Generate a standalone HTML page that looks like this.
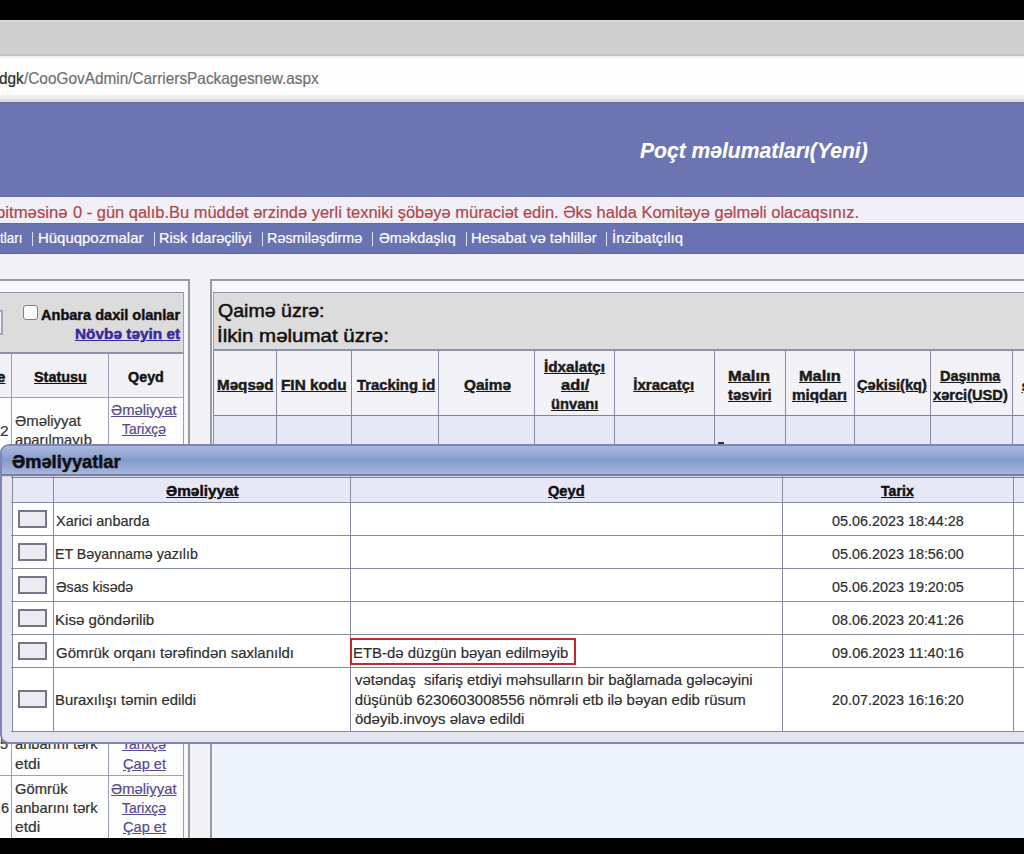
<!DOCTYPE html>
<html><head><meta charset="utf-8">
<style>
*{margin:0;padding:0;box-sizing:border-box}
html,body{width:1024px;height:854px;overflow:hidden;background:#f3f3f6;font-family:"Liberation Sans",sans-serif;position:relative}
.a{position:absolute}
.t{position:absolute;white-space:nowrap;line-height:1;transform-origin:0 0;-webkit-text-stroke:0.2px currentColor}
.hl{position:absolute;height:1px}
.vl{position:absolute;width:1px}
</style></head><body>
<div class="a" style="left:0;top:0;width:1024px;height:20px;background:#000"></div>
<div class="a" style="left:0;top:20px;width:1024px;height:36px;background:#cfcfcf"></div>
<div class="a" style="left:0;top:20px;width:1024px;height:2px;background:#dadada"></div><div class="a" style="left:0;top:54px;width:1024px;height:2px;background:#c4c4c4"></div><div class="a" style="left:0;top:56px;width:1024px;height:2px;background:#f0f0f0"></div>
<div class="a" style="left:0;top:58px;width:1024px;height:40px;background:#fdfdfd"></div>
<div class="a" style="left:0;top:95px;width:1024px;height:3px;background:#efeef2"></div>
<div class="a" style="left:0;top:99px;width:1024px;height:3px;background:#d8dbec"></div>
<div class="a" style="left:0;top:102px;width:1024px;height:1px;background:#666c9c"></div>
<div class="a" style="left:0;top:103px;width:1024px;height:94px;background:#6c75b2"></div>
<div class="a" style="left:0;top:197px;width:1024px;height:26px;background:#f1eff7"></div>
<div class="a" style="left:0;top:223px;width:1024px;height:31px;background:#6a73b1"></div>
<div class="a" style="left:0;top:196px;width:1024px;height:1px;background:#656b9e"></div>
<div class="a" style="left:0;top:223px;width:1024px;height:1px;background:#646a9c"></div>
<div class="a" style="left:0;top:253px;width:1024px;height:1px;background:#62689a"></div>

<!-- left panel -->
<div class="a" style="left:-10px;top:279px;width:200px;height:600px;border:2px solid #979ba8;background:#f8f8fb"></div>
<div class="a" style="left:-10px;top:292px;width:194px;height:62px;border-top:1px solid #8a92aa;border-right:1px solid #9aa0b4;border-bottom:2px solid #8a92aa;background:#dcdcdd"></div>
<div class="a" style="left:-8px;top:310px;width:11px;height:25px;border:2px solid #a4a6bc;background:#f4f4f6"></div>
<div class="a" style="left:23px;top:305px;width:15px;height:15px;border:1px solid #808080;border-radius:3px;background:#fcfcfc"></div>
<div class="a" style="left:-10px;top:354px;width:194px;height:44px;background:#f1f1f5"></div>
<div class="a" style="left:-10px;top:398px;width:193px;height:440px;background:#fdfdfd"></div>
<div class="hl" style="left:-10px;top:397px;width:194px;background:#9aa0b4"></div>
<div class="hl" style="left:-10px;top:775px;width:194px;background:#9aa0b4"></div>
<div class="vl" style="left:11px;top:353px;height:485px;background:#9aa0b4"></div>
<div class="vl" style="left:108px;top:353px;height:485px;background:#9aa0b4"></div>
<div class="vl" style="left:183px;top:353px;height:485px;background:#9aa0b4"></div>

<!-- right panel -->
<div class="a" style="left:210px;top:279px;width:830px;height:600px;border:2px solid #979ba8;background:#f8f8fb"></div>
<div class="a" style="left:212px;top:445px;width:830px;height:400px;background:#eff3fb"></div>
<div class="a" style="left:213px;top:292px;width:830px;height:59px;border-top:1px solid #8a92aa;border-left:1px solid #9aa0b4;border-bottom:2px solid #8a92aa;background:#dcdcdd"></div>
<div class="a" style="left:214px;top:351px;width:830px;height:64px;background:#f3f3f7"></div>
<div class="a" style="left:214px;top:416px;width:830px;height:29px;background:#e6e9f5"></div>
<div class="hl" style="left:214px;top:415px;width:830px;background:#80849c"></div>
<div class="vl" style="left:213px;top:351px;height:94px;background:#868aa4"></div>
<div class="vl" style="left:276px;top:351px;height:94px;background:#868aa4"></div>
<div class="vl" style="left:351px;top:351px;height:94px;background:#868aa4"></div>
<div class="vl" style="left:438px;top:351px;height:94px;background:#868aa4"></div>
<div class="vl" style="left:534px;top:351px;height:94px;background:#868aa4"></div>
<div class="vl" style="left:614px;top:351px;height:94px;background:#868aa4"></div>
<div class="vl" style="left:714px;top:351px;height:94px;background:#868aa4"></div>
<div class="vl" style="left:785px;top:351px;height:94px;background:#868aa4"></div>
<div class="vl" style="left:854px;top:351px;height:94px;background:#868aa4"></div>
<div class="vl" style="left:930px;top:351px;height:94px;background:#868aa4"></div>
<div class="vl" style="left:1012px;top:351px;height:94px;background:#868aa4"></div>
<div class="a" style="left:718px;top:442px;width:6px;height:2px;background:#333"></div>

<div class="a" style="left:32px;top:232px;width:1.3px;height:14px;background:#dfe2f3"></div><div class="a" style="left:153.5px;top:232px;width:1.3px;height:14px;background:#dfe2f3"></div><div class="a" style="left:261.5px;top:232px;width:1.3px;height:14px;background:#dfe2f3"></div><div class="a" style="left:372px;top:232px;width:1.3px;height:14px;background:#dfe2f3"></div><div class="a" style="left:465.5px;top:232px;width:1.3px;height:14px;background:#dfe2f3"></div><div class="a" style="left:606px;top:232px;width:1.3px;height:14px;background:#dfe2f3"></div>
<div class="t" style="left:-1.44px;top:69.97px;font-size:16.5px;color:#2a2a2a;transform:scaleX(0.9300);">dgk</div>
<div class="t" style="left:23.60px;top:69.97px;font-size:16.5px;color:#707070;transform:scaleX(0.9314);">/CooGovAdmin/CarriersPackagesnew.aspx</div>
<div class="t" style="left:640.00px;top:140.92px;font-size:21.5px;color:#ffffff;font-weight:bold;-webkit-text-stroke:0.45px #ffffff;font-style:italic;transform:scaleX(0.9805);-webkit-text-stroke:0.15px #fff;">Poçt məlumatları(Yeni)</div>
<div class="t" style="left:-3.79px;top:203.85px;font-size:17px;color:#b04648;transform:scaleX(0.9847);">bitməsinə</div>
<div class="t" style="left:72.60px;top:203.85px;font-size:17px;color:#b04648;transform:scaleX(0.9678);">0 - gün qalıb.Bu müddət ərzində yerli texniki şöbəyə müraciət edin. Əks halda Komitəyə gəlməli olacaqsınız.</div>
<div class="t" style="left:0.48px;top:230.68px;font-size:14.5px;color:#ffffff;transform:scaleX(0.9300);">tları</div>
<div class="t" style="left:37.87px;top:230.68px;font-size:14.5px;color:#ffffff;transform:scaleX(1.0302);">Hüquqpozmalar</div>
<div class="t" style="left:159.00px;top:230.68px;font-size:14.5px;color:#ffffff;">Risk Idarəçiliyi</div>
<div class="t" style="left:266.81px;top:230.68px;font-size:14.5px;color:#ffffff;transform:scaleX(0.9935);">Rəsmiləşdirmə</div>
<div class="t" style="left:378.70px;top:230.68px;font-size:14.5px;color:#ffffff;transform:scaleX(0.9957);">Əməkdaşlıq</div>
<div class="t" style="left:470.88px;top:230.68px;font-size:14.5px;color:#ffffff;transform:scaleX(1.0189);">Hesabat və təhlillər</div>
<div class="t" style="left:611.88px;top:230.68px;font-size:14.5px;color:#ffffff;transform:scaleX(1.0242);">İnzibatçılıq</div>
<div class="t" style="left:41.20px;top:307.05px;font-size:15px;color:#111;font-weight:bold;-webkit-text-stroke:0.45px #111;transform:scaleX(0.9698);">Anbara daxil olanlar</div>
<div class="t" style="left:75.27px;top:325.75px;font-size:15px;color:#36289e;font-weight:bold;-webkit-text-stroke:0.45px #36289e;text-decoration:underline;transform:scaleX(1.0253);">Növbə təyin et</div>
<div class="t" style="left:33.80px;top:369.35px;font-size:15px;color:#111;font-weight:bold;-webkit-text-stroke:0.45px #111;text-decoration:underline;transform:scaleX(0.9609);">Statusu</div>
<div class="t" style="left:128.30px;top:369.35px;font-size:15px;color:#111;font-weight:bold;-webkit-text-stroke:0.45px #111;transform:scaleX(0.9558);">Qeyd</div>
<div class="t" style="left:-3.00px;top:369.35px;font-size:15px;color:#111;font-weight:bold;-webkit-text-stroke:0.45px #111;text-decoration:underline;">e</div>
<div class="t" style="left:14.60px;top:413.68px;font-size:14.5px;color:#333333;transform:scaleX(1.0287);">Əməliyyat</div>
<div class="t" style="left:14.60px;top:432.68px;font-size:14.5px;color:#333333;transform:scaleX(1.0146);">aparılmayıb</div>
<div class="t" style="left:0.00px;top:422.82px;font-size:15.5px;color:#333333;">2</div>
<div class="t" style="left:111.30px;top:402.98px;font-size:14.5px;color:#574a8e;text-decoration:underline;transform:scaleX(1.0225);">Əməliyyat</div>
<div class="t" style="left:122.00px;top:421.57px;font-size:14.5px;color:#574a8e;text-decoration:underline;transform:scaleX(0.9594);">Tarixçə</div>
<div class="t" style="left:14.60px;top:737.17px;font-size:14.5px;color:#333333;transform:scaleX(1.0151);">anbarını tərk</div>
<div class="t" style="left:0.00px;top:737.17px;font-size:14.5px;color:#333333;">5</div>
<div class="t" style="left:122.00px;top:737.17px;font-size:14.5px;color:#574a8e;text-decoration:underline;transform:scaleX(0.9594);">Tarixçə</div>
<div class="t" style="left:14.60px;top:756.67px;font-size:14.5px;color:#333333;transform:scaleX(1.0796);">etdi</div>
<div class="t" style="left:122.50px;top:756.67px;font-size:14.5px;color:#574a8e;text-decoration:underline;transform:scaleX(1.0049);">Çap et</div>
<div class="t" style="left:14.60px;top:782.27px;font-size:14.5px;color:#333333;transform:scaleX(1.0208);">Gömrük</div>
<div class="t" style="left:14.60px;top:801.27px;font-size:14.5px;color:#333333;transform:scaleX(1.0151);">anbarını tərk</div>
<div class="t" style="left:14.60px;top:820.47px;font-size:14.5px;color:#333333;transform:scaleX(1.0796);">etdi</div>
<div class="t" style="left:1.00px;top:801.27px;font-size:14.5px;color:#333333;">6</div>
<div class="t" style="left:111.30px;top:782.27px;font-size:14.5px;color:#574a8e;text-decoration:underline;transform:scaleX(1.0225);">Əməliyyat</div>
<div class="t" style="left:122.00px;top:801.27px;font-size:14.5px;color:#574a8e;text-decoration:underline;transform:scaleX(0.9594);">Tarixçə</div>
<div class="t" style="left:122.50px;top:820.47px;font-size:14.5px;color:#574a8e;text-decoration:underline;transform:scaleX(1.0049);">Çap et</div>
<div class="t" style="left:218.40px;top:300.75px;font-size:19px;color:#111;transform:scaleX(1.0293);-webkit-text-stroke:0.5px #111;">Qaimə üzrə:</div>
<div class="t" style="left:217.32px;top:325.85px;font-size:19px;color:#111;transform:scaleX(1.0779);-webkit-text-stroke:0.5px #111;">İlkin məlumat üzrə:</div>
<div class="t" style="left:216.89px;top:377.45px;font-size:15px;color:#1a1a1a;font-weight:bold;-webkit-text-stroke:0.45px #1a1a1a;text-decoration:underline;transform:scaleX(1.0131);">Məqsəd</div>
<div class="t" style="left:280.88px;top:377.45px;font-size:15px;color:#1a1a1a;font-weight:bold;-webkit-text-stroke:0.45px #1a1a1a;text-decoration:underline;transform:scaleX(1.0223);">FIN kodu</div>
<div class="t" style="left:356.50px;top:377.45px;font-size:15px;color:#1a1a1a;font-weight:bold;-webkit-text-stroke:0.45px #1a1a1a;text-decoration:underline;transform:scaleX(0.9883);">Tracking id</div>
<div class="t" style="left:463.70px;top:377.45px;font-size:15px;color:#1a1a1a;font-weight:bold;-webkit-text-stroke:0.45px #1a1a1a;text-decoration:underline;transform:scaleX(1.0238);">Qaimə</div>
<div class="t" style="left:543.68px;top:358.85px;font-size:15px;color:#1a1a1a;font-weight:bold;-webkit-text-stroke:0.45px #1a1a1a;text-decoration:underline;transform:scaleX(1.0176);">İdxalatçı</div>
<div class="t" style="left:560.80px;top:377.45px;font-size:15px;color:#1a1a1a;font-weight:bold;-webkit-text-stroke:0.45px #1a1a1a;text-decoration:underline;transform:scaleX(1.0948);">adı/</div>
<div class="t" style="left:551.00px;top:396.25px;font-size:15px;color:#1a1a1a;font-weight:bold;-webkit-text-stroke:0.45px #1a1a1a;text-decoration:underline;transform:scaleX(0.9798);">ünvanı</div>
<div class="t" style="left:633.30px;top:377.45px;font-size:15px;color:#1a1a1a;font-weight:bold;-webkit-text-stroke:0.45px #1a1a1a;text-decoration:underline;">İxracatçı</div>
<div class="t" style="left:727.90px;top:367.95px;font-size:15px;color:#1a1a1a;font-weight:bold;-webkit-text-stroke:0.45px #1a1a1a;text-decoration:underline;transform:scaleX(1.0976);">Malın</div>
<div class="t" style="left:727.80px;top:386.95px;font-size:15px;color:#1a1a1a;font-weight:bold;-webkit-text-stroke:0.45px #1a1a1a;text-decoration:underline;transform:scaleX(0.9880);">təsviri</div>
<div class="t" style="left:798.71px;top:367.95px;font-size:15px;color:#1a1a1a;font-weight:bold;-webkit-text-stroke:0.45px #1a1a1a;text-decoration:underline;transform:scaleX(1.0895);">Malın</div>
<div class="t" style="left:792.20px;top:386.95px;font-size:15px;color:#1a1a1a;font-weight:bold;-webkit-text-stroke:0.45px #1a1a1a;text-decoration:underline;transform:scaleX(1.0165);">miqdarı</div>
<div class="t" style="left:857.20px;top:377.15px;font-size:15px;color:#1a1a1a;font-weight:bold;-webkit-text-stroke:0.45px #1a1a1a;text-decoration:underline;transform:scaleX(0.9750);">Çəkisi(kq)</div>
<div class="t" style="left:939.63px;top:367.95px;font-size:15px;color:#1a1a1a;font-weight:bold;-webkit-text-stroke:0.45px #1a1a1a;text-decoration:underline;transform:scaleX(0.9665);">Daşınma</div>
<div class="t" style="left:933.20px;top:386.95px;font-size:15px;color:#1a1a1a;font-weight:bold;-webkit-text-stroke:0.45px #1a1a1a;text-decoration:underline;transform:scaleX(0.9753);">xərci(USD)</div>
<div class="t" style="left:1021.50px;top:378.25px;font-size:15px;color:#222;font-weight:bold;-webkit-text-stroke:0.45px #222;text-decoration:underline;">ş</div>

<!-- modal -->
<div class="a" style="left:0;top:444px;width:1060px;height:300px;border:2px solid #7d84b6;border-radius:9px;background:#e4e5ee"></div>
<div class="a" style="left:2px;top:446px;width:1022px;height:28px;border-radius:7px 0 0 0;background:linear-gradient(#aab6de,#97a9d4 30%,#829bcb 50%,#94a8d3 75%,#a9b5dc)"></div>
<div class="a" style="left:2px;top:474px;width:1022px;height:2px;background:#7a80a2"></div>
<div class="hl" style="left:2px;top:476px;width:1022px;background:#d8dcee"></div>
<div class="a" style="left:12px;top:477px;width:1020px;height:255px;background:#fff"></div>
<div class="a" style="left:12px;top:478px;width:1020px;height:24px;background:#e6e8f5"></div>
<div class="hl" style="left:11px;top:477px;width:1013px;background:#7a7f9e"></div>
<div class="hl" style="left:11px;top:502px;width:1013px;background:#868a9f"></div>
<div class="hl" style="left:11px;top:535px;width:1013px;background:#868a9f"></div>
<div class="hl" style="left:11px;top:568px;width:1013px;background:#868a9f"></div>
<div class="hl" style="left:11px;top:601px;width:1013px;background:#868a9f"></div>
<div class="hl" style="left:11px;top:634px;width:1013px;background:#868a9f"></div>
<div class="hl" style="left:11px;top:667px;width:1013px;background:#868a9f"></div>
<div class="hl" style="left:11px;top:731px;width:1013px;background:#868a9f"></div>
<div class="vl" style="left:12px;top:476px;height:256px;background:#868a9f"></div>
<div class="vl" style="left:53px;top:476px;height:256px;background:#868a9f"></div>
<div class="vl" style="left:350px;top:476px;height:256px;background:#868a9f"></div>
<div class="vl" style="left:782px;top:476px;height:256px;background:#868a9f"></div>
<div class="vl" style="left:1013px;top:476px;height:256px;background:#868a9f"></div>
<div class="a" style="left:18px;top:510px;width:29px;height:18px;border:2px solid #74778a;background:#ececf0"></div>
<div class="a" style="left:18px;top:543px;width:29px;height:18px;border:2px solid #74778a;background:#ececf0"></div>
<div class="a" style="left:18px;top:576px;width:29px;height:18px;border:2px solid #74778a;background:#ececf0"></div>
<div class="a" style="left:18px;top:609px;width:29px;height:18px;border:2px solid #74778a;background:#ececf0"></div>
<div class="a" style="left:18px;top:642px;width:29px;height:18px;border:2px solid #74778a;background:#ececf0"></div>
<div class="a" style="left:18px;top:690px;width:29px;height:18px;border:2px solid #74778a;background:#ececf0"></div>
<div class="a" style="left:350px;top:638px;width:226px;height:27px;border:2px solid #c3282e"></div>
<div class="t" style="left:11.70px;top:453.20px;font-size:18px;color:#111;font-weight:bold;-webkit-text-stroke:0.45px #111;transform:scaleX(1.0138);-webkit-text-stroke:0.5px #111;">Əməliyyatlar</div>
<div class="t" style="left:165.80px;top:483.25px;font-size:15px;color:#111;font-weight:bold;-webkit-text-stroke:0.45px #111;text-decoration:underline;transform:scaleX(1.0249);">Əməliyyat</div>
<div class="t" style="left:548.00px;top:483.25px;font-size:15px;color:#111;font-weight:bold;-webkit-text-stroke:0.45px #111;text-decoration:underline;transform:scaleX(0.9745);">Qeyd</div>
<div class="t" style="left:881.00px;top:483.25px;font-size:15px;color:#111;font-weight:bold;-webkit-text-stroke:0.45px #111;text-decoration:underline;transform:scaleX(0.9436);">Tarix</div>
<div class="t" style="left:56.20px;top:513.05px;font-size:15px;color:#2e2e2e;transform:scaleX(0.9663);">Xarici anbarda</div>
<div class="t" style="left:832.00px;top:513.05px;font-size:15px;color:#2e2e2e;transform:scaleX(0.9578);">05.06.2023 18:44:28</div>
<div class="t" style="left:55.25px;top:546.05px;font-size:15px;color:#2e2e2e;transform:scaleX(0.9481);">ET Bəyannamə yazılıb</div>
<div class="t" style="left:832.00px;top:546.05px;font-size:15px;color:#2e2e2e;transform:scaleX(0.9578);">05.06.2023 18:56:00</div>
<div class="t" style="left:56.20px;top:579.05px;font-size:15px;color:#2e2e2e;transform:scaleX(0.9387);">Əsas kisədə</div>
<div class="t" style="left:832.00px;top:579.05px;font-size:15px;color:#2e2e2e;transform:scaleX(0.9578);">05.06.2023 19:20:05</div>
<div class="t" style="left:55.19px;top:612.05px;font-size:15px;color:#2e2e2e;transform:scaleX(1.0077);">Kisə göndərilib</div>
<div class="t" style="left:832.00px;top:612.05px;font-size:15px;color:#2e2e2e;transform:scaleX(0.9578);">08.06.2023 20:41:26</div>
<div class="t" style="left:56.20px;top:645.05px;font-size:15px;color:#2e2e2e;transform:scaleX(0.9979);">Gömrük orqanı tərəfindən saxlanıldı</div>
<div class="t" style="left:832.00px;top:645.05px;font-size:15px;color:#2e2e2e;transform:scaleX(0.9657);">09.06.2023 11:40:16</div>
<div class="t" style="left:55.21px;top:691.95px;font-size:15px;color:#2e2e2e;transform:scaleX(0.9899);">Buraxılışı təmin edildi</div>
<div class="t" style="left:832.00px;top:691.95px;font-size:15px;color:#2e2e2e;transform:scaleX(0.9578);">20.07.2023 16:16:20</div>
<div class="t" style="left:353.01px;top:644.55px;font-size:15px;color:#2e2e2e;transform:scaleX(0.9932);">ETB-də düzgün bəyan edilməyib</div>
<div class="t" style="left:354.70px;top:672.35px;font-size:15px;color:#2e2e2e;transform:scaleX(0.9956);">vətəndaş &nbsp;sifariş etdiyi məhsulların bir bağlamada gələcəyini</div>
<div class="t" style="left:354.70px;top:692.05px;font-size:15px;color:#2e2e2e;">düşünüb 6230603008556 nömrəli etb ilə bəyan edib rüsum</div>
<div class="t" style="left:354.70px;top:711.35px;font-size:15px;color:#2e2e2e;transform:scaleX(0.9955);">ödəyib.invoys əlavə edildi</div>

<div class="a" style="left:0;top:838px;width:1024px;height:16px;background:#000"></div>
</body></html>
